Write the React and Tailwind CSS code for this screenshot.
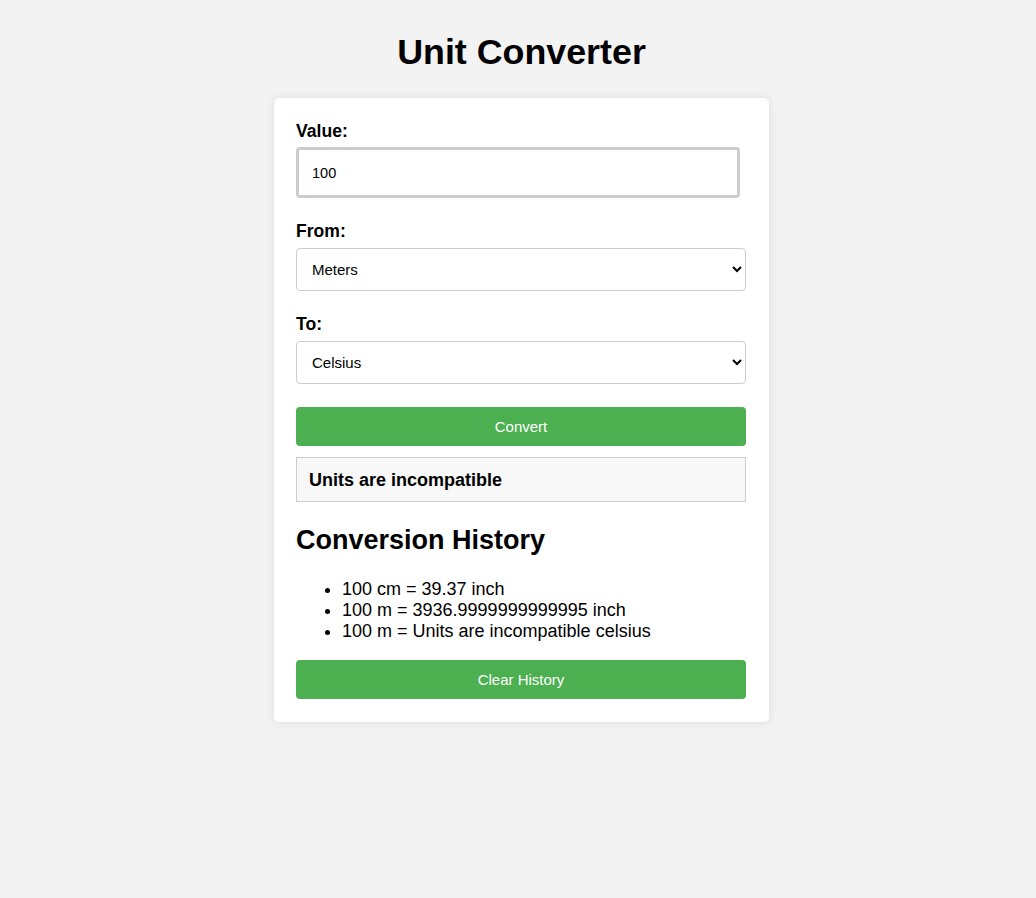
import React, { useState } from 'react';

const history = [
  '100 cm = 39.37 inch',
  '100 m = 3936.9999999999995 inch',
  '100 m = Units are incompatible celsius',
];

export default function App() {
  const [value, setValue] = useState('100');
  const [from, setFrom] = useState('m');
  const [to, setTo] = useState('c');

  return (
    <div className="min-h-[898px] bg-[#f3f3f3] pt-[32px] pl-[7px] text-black" style={{ fontFamily: '"Liberation Sans", Arial, sans-serif' }}>
      <h1 className="text-center text-[35.8px] font-bold leading-[40px] mb-[26px]">Unit Converter</h1>

      {/* Converter card */}
      <div className="mx-auto w-[495px] bg-white rounded-[5px] shadow-[0_0_10px_rgba(0,0,0,0.1)] pl-[22px] pr-[23px] pt-[22px] pb-[23px]">
        <label className="block text-[17.6px] font-bold leading-[22px] mb-[5px]">Value:</label>
        <input
          type="text"
          value={value}
          onChange={(e) => setValue(e.target.value)}
          className="block w-[444px] h-[51px] border-[3px] border-[#cccccc] rounded-[4px] px-[13px] pt-px text-[14.5px] outline-none"
        />

        <label className="block text-[17.6px] font-bold leading-[22px] mt-[22px] mb-[6px]">From:</label>
        <select
          value={from}
          onChange={(e) => setFrom(e.target.value)}
          className="block w-full h-[43px] border border-[#cccccc] rounded-[4px] px-[11px] text-[15px] bg-white"
        >
          <option value="m">Meters</option>
          <option value="cm">Centimeters</option>
          <option value="in">Inches</option>
          <option value="c">Celsius</option>
        </select>

        <label className="block text-[17.6px] font-bold leading-[22px] mt-[22px] mb-[6px]">To:</label>
        <select
          value={to}
          onChange={(e) => setTo(e.target.value)}
          className="block w-full h-[43px] border border-[#cccccc] rounded-[4px] px-[11px] text-[15px] bg-white"
        >
          <option value="m">Meters</option>
          <option value="cm">Centimeters</option>
          <option value="in">Inches</option>
          <option value="c">Celsius</option>
        </select>

        <button className="block w-full h-[39px] mt-[23px] pt-[2px] bg-[#4caf50] text-white text-[15px] rounded-[4px]">Convert</button>

        <div className="mt-[11px] bg-[#f8f8f8] border border-[#cccccc] px-3 pt-[11px] pb-[10px]">
          <h3 className="text-[18px] font-bold leading-[22px]">Units are incompatible</h3>
        </div>

        <h2 className="mt-[23px] text-[27px] font-bold leading-[31px]">Conversion History</h2>
        <ul className="list-disc pl-[46px] mt-[23px] text-[18px] leading-[21px]">
          {history.map((item) => (
            <li key={item}>{item}</li>
          ))}
        </ul>

        <button className="block w-full h-[39px] mt-[18px] pt-[2px] bg-[#4caf50] text-white text-[15px] rounded-[4px]">Clear History</button>
      </div>
    </div>
  );
}
